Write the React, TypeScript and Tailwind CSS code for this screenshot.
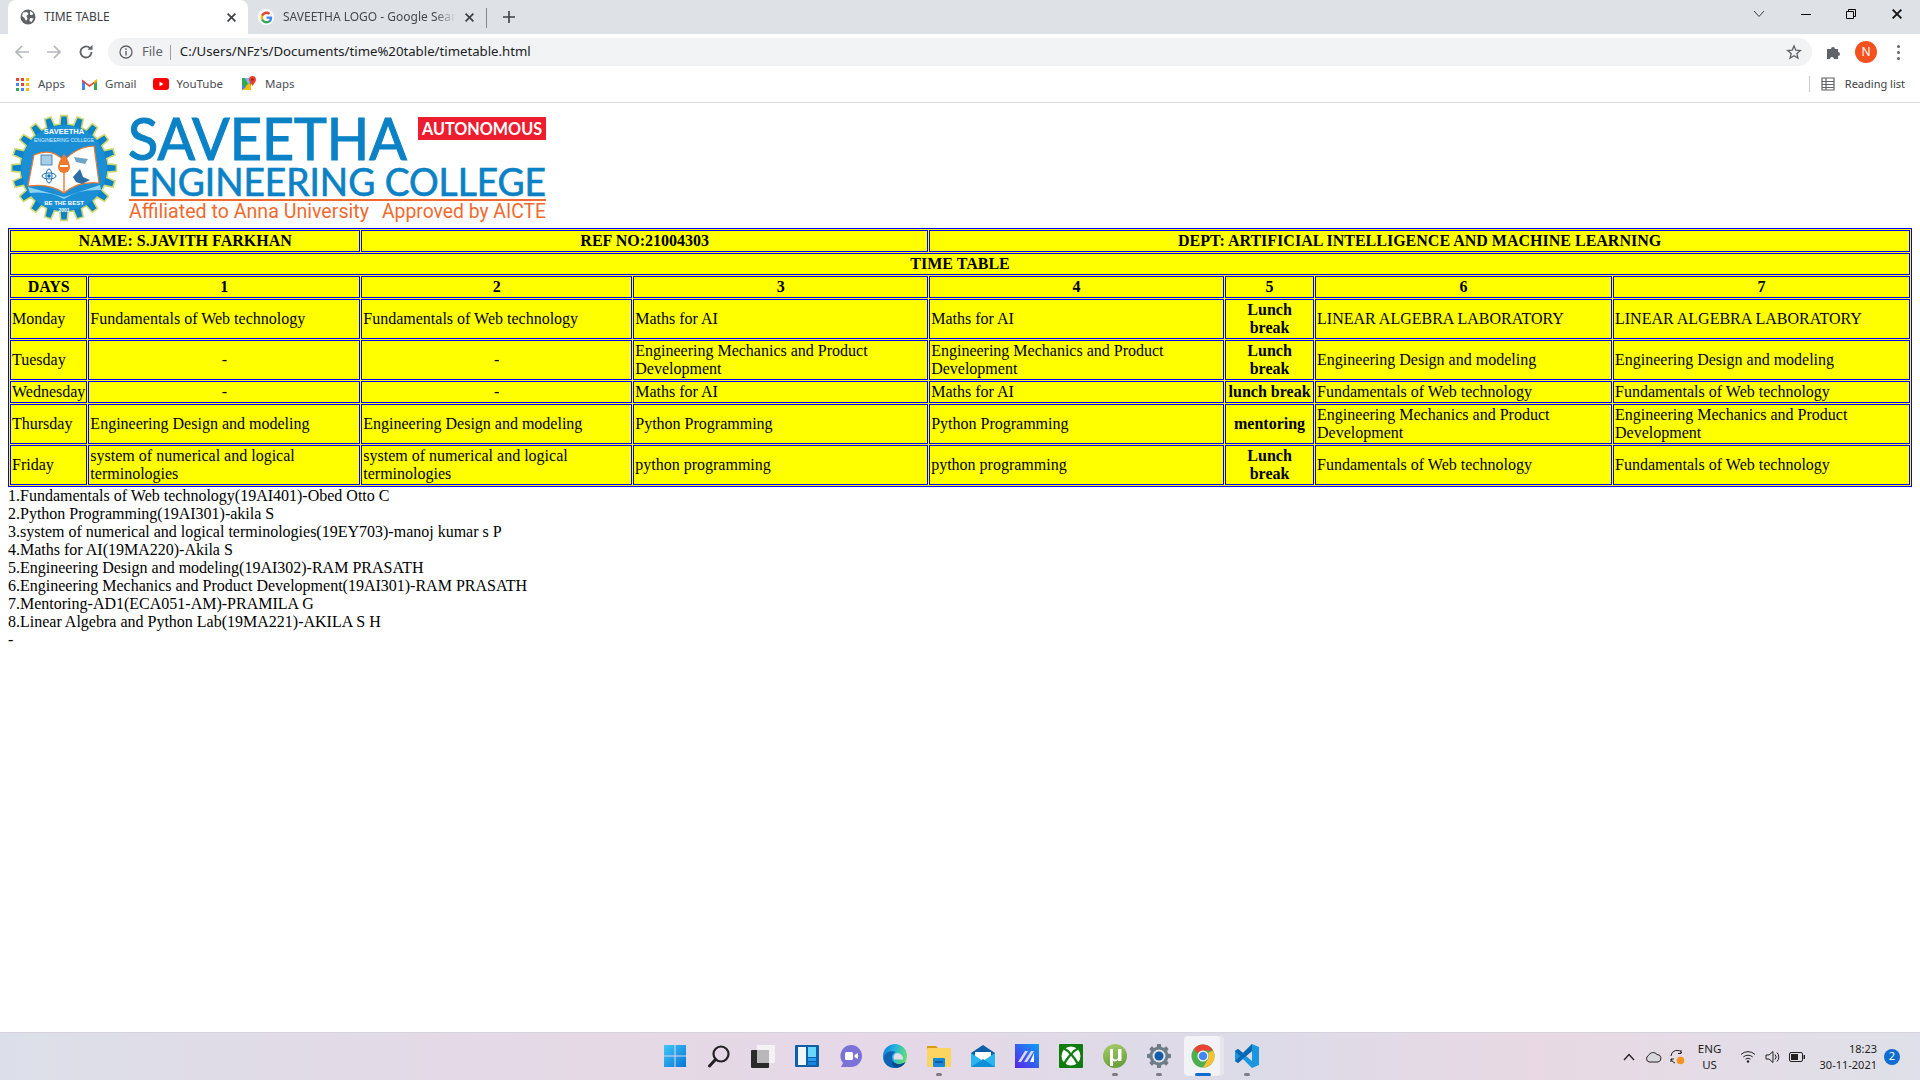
import type { ReactNode } from "react";

const ui = "font-['Noto_Sans',sans-serif]";

function gearPath(cx: number, cy: number, outer: number, inner: number, teeth: number) {
  const pts: string[] = [];
  const step = (Math.PI * 2) / teeth;
  for (let i = 0; i < teeth; i++) {
    const a = i * step - Math.PI / 2;
    const list: [number, number][] = [
      [inner, a - step * 0.3],
      [outer, a - step * 0.2],
      [outer, a + step * 0.2],
      [inner, a + step * 0.3],
    ];
    for (const [r, t] of list) {
      pts.push(`${(cx + r * Math.cos(t)).toFixed(1)} ${(cy + r * Math.sin(t)).toFixed(1)}`);
    }
  }
  return "M" + pts.join("L") + "Z";
}

function Logo() {
  return (
    <svg width="560" height="117" viewBox="0 0 560 117" className="block">
      {/* emblem */}
      <g transform="translate(0 -2)">
        <path d={gearPath(56, 59, 52.5, 44, 20)} fill="#0c82c8" stroke="#cfd86a" strokeWidth="1.6" />
        <circle cx="56" cy="59" r="43" fill="#1b8fd6" />
        <text x="56" y="25" textAnchor="middle" fontSize="7.5" fontWeight="700" fill="#fff" className="font-['Liberation_Sans',sans-serif]">SAVEETHA</text>
        <text x="56" y="33" textAnchor="middle" fontSize="5" fill="#d9f0ff" className="font-['Liberation_Sans',sans-serif]">ENGINEERING COLLEGE</text>
        <path d="M20 78 L56 88 L92 76 L93 81 Q70 80 56 90 Q42 82 22 84Z" fill="#8fd3f2" />
        <path d="M26 46 Q44 38 56 52 Q68 38 86 37 L91 74 Q70 72 56 84 Q42 74 20 77Z" fill="#fff" stroke="#f0792f" strokeWidth="1.2" />
        <rect x="33" y="46" width="11" height="10" fill="#a8cde6" stroke="#2c73a8" strokeWidth="0.8" />
        <path d="M66 48 L80 50 L77 55 L68 53Z" fill="#6fa5c9" />
        <circle cx="41" cy="67" r="1.800" fill="#1a6fb0" />
        <ellipse cx="41" cy="67" rx="7" ry="3" fill="none" stroke="#1a6fb0" strokeWidth="1" />
        <ellipse cx="41" cy="67" rx="3" ry="7" fill="none" stroke="#1a6fb0" strokeWidth="1" />
        <path d="M72 60 L75 68 L82 71 L74 75 L68 73 L65 68Z" fill="#2b6fa6" />
        <path d="M56 45 Q62 53 62 58 A6 6 0 0 1 50 58 Q50 53 56 45Z" fill="#f0792f" />
        <rect x="52" y="56" width="8" height="2" fill="#fff" />
        <rect x="55.300" y="63" width="1.400" height="20" fill="#f0792f" />
        <text x="56" y="96" textAnchor="middle" fontSize="6" fontWeight="700" fill="#fff" className="font-['Liberation_Sans',sans-serif]">BE THE BEST</text>
        <text x="56" y="103" textAnchor="middle" fontSize="5" fontWeight="700" fill="#fff" className="font-['Liberation_Sans',sans-serif]">2001</text>
      </g>
      {/* wordmark */}
      <text x="120" y="49" fontSize="59" fill="#0b82c6" stroke="#0b82c6" strokeWidth="1.200" textLength="279" lengthAdjust="spacingAndGlyphs" className="font-['Lato',sans-serif]">SAVEETHA</text>
      <rect x="410" y="6" width="128" height="23" fill="#ed1c2e" />
      <text x="414" y="24" fontSize="16.5" fontWeight="700" fill="#fff" textLength="120" lengthAdjust="spacingAndGlyphs" className="font-['Lato',sans-serif]">AUTONOMOUS</text>
      <text x="120" y="85" fontSize="38" fill="#0b82c6" stroke="#0b82c6" strokeWidth="0.700" textLength="418" lengthAdjust="spacingAndGlyphs" className="font-['Lato',sans-serif]">ENGINEERING COLLEGE</text>
      <rect x="121" y="88" width="417" height="2" fill="#f26a2e" />
      <text x="121" y="107" fontSize="20" fill="#f26a2e" textLength="240" lengthAdjust="spacingAndGlyphs" className="font-['Roboto',sans-serif]">Affiliated to Anna University</text>
      <text x="374" y="107" fontSize="20" fill="#f26a2e" textLength="164" lengthAdjust="spacingAndGlyphs" className="font-['Roboto',sans-serif]">Approved by AICTE</text>
    </svg>
  );
}

function Globe() {
  return (
    <svg width="16" height="16" viewBox="0 0 16 16">
      <circle cx="8" cy="8" r="7.5" fill="#5f6368" />
      <path d="M3 3.5 L7 3 L8.5 5 L6.5 7 L7.5 9.5 L6 12 L4.5 9 L2 7Z M10 2 L13 4 L12.5 6 L10 6Z M10 9 L13.5 9.5 L11.5 13 L9.5 12Z" fill="#fff" />
    </svg>
  );
}

function GoogleG({ size = 16 }: { size?: number }) {
  return (
    <svg width={size} height={size} viewBox="0 0 48 48">
      <path fill="#4285f4" d="M45 24.5c0-1.600-.1-3.100-.4-4.500H24v8.500h11.800c-.5 2.700-2 5-4.300 6.600v5.500h7C42.600 36.800 45 31.200 45 24.500z" />
      <path fill="#34a853" d="M24 46c5.900 0 10.900-2 14.500-5.300l-7-5.500c-2 1.300-4.500 2.100-7.500 2.100-5.700 0-10.600-3.900-12.300-9H4.500v5.600C8.100 41 15.500 46 24 46z" />
      <path fill="#fbbc05" d="M11.700 28.300c-.9-2.700-.9-5.700 0-8.500v-5.600H4.500c-3 6-3 13.700 0 19.700z" />
      <path fill="#ea4335" d="M24 10.700c3.200 0 6.100 1.100 8.400 3.300l6.200-6.200C34.900 4.300 29.900 2 24 2 15.500 2 8.100 7 4.500 14.200l7.200 5.600c1.700-5.200 6.600-9.100 12.300-9.100z" />
    </svg>
  );
}

function AppsGrid() {
  const colors = ["#ea4335", "#ea4335", "#fbbc05", "#4285f4", "#ea4335", "#fbbc05", "#34a853", "#4285f4", "#fbbc05"];
  return (
    <div className="grid grid-cols-3 gap-[2px] w-[13px] h-[13px]">
      {colors.map((c, i) => (
        <span key={i} className="w-[3px] h-[3px]" style={{ backgroundColor: c }} />
      ))}
    </div>
  );
}

function Gmail() {
  return (
    <svg width="15" height="12" viewBox="0 0 15 12">
      <path d="M0 2 L0 12 L3 12 L3 4Z" fill="#4285f4" />
      <path d="M15 2 L15 12 L12 12 L12 4Z" fill="#34a853" />
      <path d="M0 1.500 L7.500 7 L15 1.500 L15 3.500 L7.500 9 L0 3.500Z" fill="#ea4335" />
      <path d="M12 3 L15 1 L15 3.500 L12 5.500Z" fill="#fbbc05" />
    </svg>
  );
}

function YouTube() {
  return (
    <svg width="16" height="12" viewBox="0 0 16 12">
      <rect width="16" height="12" rx="3" fill="#f00" />
      <path d="M6.500 3.500 L10.500 6 L6.500 8.500Z" fill="#fff" />
    </svg>
  );
}

function Maps() {
  return (
    <svg width="14" height="16" viewBox="0 0 14 16">
      <path d="M0 2 L9 2 L9 14 L0 14Z" fill="#34a853" />
      <path d="M0 14 L7 7 L9 9 L9 14Z" fill="#fbbc05" />
      <path d="M0 14 L0 9 L4 11Z" fill="#4285f4" />
      <path d="M3 2 L9 2 L9 6 L6 8Z" fill="#8ab4f8" />
      <path d="M10.500 0 A3.500 3.500 0 0 1 14 3.500 C14 6 11.500 8 10.500 10 C9.500 8 7 6 7 3.500 A3.500 3.500 0 0 1 10.500 0Z" fill="#ea4335" />
      <circle cx="10.500" cy="3.500" r="1.200" fill="#a61c12" />
    </svg>
  );
}

function X({ size = 8, color = "#3c4043" }: { size?: number; color?: string }) {
  return (
    <svg width={size} height={size} viewBox="0 0 8 8" className="block">
      <path d="M0.500 0.500 L7.500 7.500 M7.500 0.500 L0.500 7.500" stroke={color} strokeWidth="1.500" />
    </svg>
  );
}

function TabBar() {
  return (
    <div className="h-[34px] bg-[#dee1e6] flex items-end shrink-0">
      <div className="ml-2 w-[240px] h-[34px] bg-white rounded-t-lg flex items-center pl-3 pr-3 text-[12px] text-[#3c4043]">
        <Globe />
        <span className="ml-2 flex-1">TIME TABLE</span>
        <X size={9} />
      </div>
      <div className="w-[238px] h-[34px] flex items-center pl-[10px] pr-3 text-[12px] text-[#45484d]">
        <span className="w-4 h-4 rounded-full bg-white flex items-center justify-center shrink-0">
          <GoogleG size={13} />
        </span>
        <span className="ml-[9px] w-[174px] overflow-hidden whitespace-nowrap [mask-image:linear-gradient(90deg,#000_88%,transparent_100%)]">SAVEETHA LOGO - Google Search</span>
        <span className="ml-[9px]"><X size={9} /></span>
      </div>
      <div className="w-px h-5 bg-[#80868b] mb-[6px]" />
      <div className="ml-[15px] h-[34px] flex items-center">
        <svg width="14" height="14" viewBox="0 0 14 14">
          <path d="M7 1 V13 M1 7 H13" stroke="#3c4043" strokeWidth="1.600" />
        </svg>
      </div>
      <div className="flex-1" />
      <div className="h-[28px] self-start flex items-center">
        <svg width="12" height="8" viewBox="0 0 12 8" className="mr-[36px]">
          <path d="M1 1 L6 6.500 L11 1" fill="none" stroke="#3c4043" strokeWidth="1" />
        </svg>
        <div className="w-[10px] h-px bg-black mr-[35px]" />
        <svg width="10" height="10" viewBox="0 0 10 10" className="mr-[36px]">
          <path d="M0.500 2.500 H7.500 V9.500 H0.500Z M2.500 2.500 V0.500 H9.500 V7.500 H7.500" fill="none" stroke="#000" strokeWidth="1" />
        </svg>
        <span className="mr-[18px]"><X size={10} color="#111" /></span>
      </div>
    </div>
  );
}

function Toolbar() {
  return (
    <div className="h-[34px] pt-[2px] bg-white flex items-center shrink-0">
      <svg width="16" height="16" viewBox="0 0 16 16" className="ml-[14px]">
        <path d="M15 8 H2 M8 2 L2 8 L8 14" fill="none" stroke="#b5b7ba" strokeWidth="1.700" />
      </svg>
      <svg width="16" height="16" viewBox="0 0 16 16" className="ml-4">
        <path d="M1 8 H14 M8 2 L14 8 L8 14" fill="none" stroke="#b5b7ba" strokeWidth="1.700" />
      </svg>
      <svg width="16" height="16" viewBox="0 0 16 16" className="ml-4">
        <path d="M13.500 8 A5.500 5.500 0 1 1 11.800 4" fill="none" stroke="#5f6368" strokeWidth="1.800" />
        <path d="M9.500 5.700 H14.500 V0.700Z" fill="#5f6368" />
      </svg>
      <div className="ml-[14px] w-[1704px] h-7 rounded-full bg-[#f1f3f4] flex items-center">
        <svg width="14" height="14" viewBox="0 0 14 14" className="ml-[11px]">
          <circle cx="7" cy="7" r="6" fill="none" stroke="#5f6368" strokeWidth="1.300" />
          <path d="M7 6 V10.500 M7 3.300 V5" stroke="#5f6368" strokeWidth="1.400" />
        </svg>
        <span className="ml-[9px] text-[13px] text-[#5f6368]">File</span>
        <span className="ml-[7px] w-px h-[15px] bg-[#9aa0a6]" />
        <span className="ml-[9px] text-[13.2px] text-[#202124] flex-1 whitespace-nowrap">C:/Users/NFz's/Documents/time%20table/timetable.html</span>
        <svg width="16" height="16" viewBox="0 0 24 24" className="mr-[10px]">
          <path d="M12 3 L14.700 9.300 L21.500 9.900 L16.300 14.400 L17.900 21 L12 17.500 L6.100 21 L7.700 14.400 L2.500 9.900 L9.300 9.300Z" fill="none" stroke="#5f6368" strokeWidth="2" />
        </svg>
      </div>
      <svg width="16" height="16" viewBox="0 0 16 16" className="ml-[14px]">
        <path d="M1 5 H5 A2 2 0 1 1 9 5 H12 V8 A2 2 0 1 1 12 12 V15 H8 A2 2 0 1 0 4 15 H1Z" fill="#5f6368" />
      </svg>
      <div className="ml-[13px] w-[22px] h-[22px] rounded-full bg-[#f4511e] text-white text-[12px] flex items-center justify-center">N</div>
      <div className="ml-[20px] flex flex-col gap-[3px]">
        <span className="w-[3px] h-[3px] rounded-full bg-[#5f6368]" />
        <span className="w-[3px] h-[3px] rounded-full bg-[#5f6368]" />
        <span className="w-[3px] h-[3px] rounded-full bg-[#5f6368]" />
      </div>
    </div>
  );
}

function Bookmark({ icon, label, className }: { icon: ReactNode; label: string; className: string }) {
  return (
    <div className={`flex items-center ${className}`}>
      <span className="w-4 flex justify-center">{icon}</span>
      <span className="ml-2 text-[11.5px] text-[#4a4d51]">{label}</span>
    </div>
  );
}

function Bookmarks() {
  return (
    <div className="h-[35px] pb-[2px] bg-white border-b border-[#d9dadc] flex items-center shrink-0">
      <Bookmark icon={<AppsGrid />} label="Apps" className="ml-[14px]" />
      <Bookmark icon={<Gmail />} label="Gmail" className="ml-[16px]" />
      <Bookmark icon={<YouTube />} label="YouTube" className="ml-[16px]" />
      <Bookmark icon={<Maps />} label="Maps" className="ml-[18px]" />
      <div className="flex-1" />
      <div className="w-px h-[16px] bg-[#c9cbce]" />
      <svg width="14" height="14" viewBox="0 0 14 14" className="ml-[11px]">
        <path d="M1 1 H13 V13 H1Z M5 1 V13 M1 4.500 H13 M1 7.500 H13 M1 10.500 H13" fill="none" stroke="#5f6368" strokeWidth="1.200" />
      </svg>
      <span className="ml-[10px] mr-[15px] text-[11px] text-[#3c4043]">Reading list</span>
    </div>
  );
}

const td = "border border-[#0000ff] px-px py-0 align-middle";
const th = "border border-[#0000ff] px-px py-0 align-middle font-bold text-center";

type Cell = { text: string; center?: boolean; bold?: boolean };

const rows: { h: string; cells: Cell[] }[] = [
  {
    h: "h-[40px]",
    cells: [
      { text: "Monday" },
      { text: "Fundamentals of Web technology" },
      { text: "Fundamentals of Web technology" },
      { text: "Maths for AI" },
      { text: "Maths for AI" },
      { text: "Lunch break", center: true, bold: true },
      { text: "LINEAR ALGEBRA LABORATORY" },
      { text: "LINEAR ALGEBRA LABORATORY" },
    ],
  },
  {
    h: "h-[40px]",
    cells: [
      { text: "Tuesday" },
      { text: "-", center: true },
      { text: "-", center: true },
      { text: "Engineering Mechanics and Product Development" },
      { text: "Engineering Mechanics and Product Development" },
      { text: "Lunch break", center: true, bold: true },
      { text: "Engineering Design and modeling" },
      { text: "Engineering Design and modeling" },
    ],
  },
  {
    h: "h-[22px]",
    cells: [
      { text: "Wednesday" },
      { text: "-", center: true },
      { text: "-", center: true },
      { text: "Maths for AI" },
      { text: "Maths for AI" },
      { text: "lunch break", center: true, bold: true },
      { text: "Fundamentals of Web technology" },
      { text: "Fundamentals of Web technology" },
    ],
  },
  {
    h: "h-[40px]",
    cells: [
      { text: "Thursday" },
      { text: "Engineering Design and modeling" },
      { text: "Engineering Design and modeling" },
      { text: "Python Programming" },
      { text: "Python Programming" },
      { text: "mentoring", center: true, bold: true },
      { text: "Engineering Mechanics and Product Development" },
      { text: "Engineering Mechanics and Product Development" },
    ],
  },
  {
    h: "h-[40px]",
    cells: [
      { text: "Friday" },
      { text: "system of numerical and logical terminologies" },
      { text: "system of numerical and logical terminologies" },
      { text: "python programming" },
      { text: "python programming" },
      { text: "Lunch break", center: true, bold: true },
      { text: "Fundamentals of Web technology" },
      { text: "Fundamentals of Web technology" },
    ],
  },
];

const notes = [
  "1.Fundamentals of Web technology(19AI401)-Obed Otto C",
  "2.Python Programming(19AI301)-akila S",
  "3.system of numerical and logical terminologies(19EY703)-manoj kumar s P",
  "4.Maths for AI(19MA220)-Akila S",
  "5.Engineering Design and modeling(19AI302)-RAM PRASATH",
  "6.Engineering Mechanics and Product Development(19AI301)-RAM PRASATH",
  "7.Mentoring-AD1(ECA051-AM)-PRAMILA G",
  "8.Linear Algebra and Python Lab(19MA221)-AKILA S H",
  "-",
];

function TimeTable() {
  return (
    <table className="w-full border-separate [border-spacing:1px] border border-[#0000ff] bg-[#ffff00] text-black text-[16px] leading-[18px]">
      <colgroup>
        <col className="w-[77px]" />
        <col className="w-[272px]" />
        <col className="w-[271px]" />
        <col className="w-[295px]" />
        <col className="w-[295px]" />
        <col className="w-[89px]" />
        <col className="w-[297px]" />
        <col className="w-[297px]" />
      </colgroup>
      <tbody>
        <tr>
          <th colSpan={2} className={`${th} h-[22px]`}>NAME: S.JAVITH FARKHAN</th>
          <th colSpan={2} className={th}>REF NO:21004303</th>
          <th colSpan={4} className={th}>DEPT: ARTIFICIAL INTELLIGENCE AND MACHINE LEARNING</th>
        </tr>
        <tr>
          <th colSpan={8} className={`${th} h-[22px]`}>TIME TABLE</th>
        </tr>
        <tr>
          <th className={`${th} h-[22px]`}>DAYS</th>
          {[1, 2, 3, 4, 5, 6, 7].map((n) => (
            <th key={n} className={th}>{n}</th>
          ))}
        </tr>
        {rows.map((row) => (
          <tr key={row.cells[0].text}>
            {row.cells.map((c, i) => (
              <td
                key={i}
                className={`${td} ${row.h} ${c.center ? "text-center" : "text-left"} ${c.bold ? "font-bold" : "font-normal"}`}
              >
                {c.text}
              </td>
            ))}
          </tr>
        ))}
      </tbody>
    </table>
  );
}

function WinStart() {
  return (
    <svg width="24" height="24" viewBox="0 0 24 24">
      <defs>
        <linearGradient id="win" x1="0" y1="0" x2="1" y2="1">
          <stop offset="0" stopColor="#3fc8f8" />
          <stop offset="1" stopColor="#0674d6" />
        </linearGradient>
      </defs>
      <path d="M1 1 H11.500 V11.500 H1Z M12.500 1 H23 V11.500 H12.500Z M1 12.500 H11.500 V23 H1Z M12.500 12.500 H23 V23 H12.500Z" fill="url(#win)" />
    </svg>
  );
}

function SearchIcon() {
  return (
    <svg width="24" height="24" viewBox="0 0 24 24">
      <circle cx="14" cy="10" r="7.500" fill="none" stroke="#222" strokeWidth="2.200" />
      <path d="M8.500 15.500 L2.500 22" stroke="#222" strokeWidth="3" strokeLinecap="round" />
    </svg>
  );
}

function TaskView() {
  return (
    <svg width="24" height="24" viewBox="0 0 24 24">
      <rect x="6" y="1" width="18" height="18" rx="1" fill="#f4f2f4" />
      <rect x="0" y="6" width="18" height="18" rx="1" fill="#2a2a2a" />
      <rect x="6" y="6" width="12" height="13" fill="#b9b7b9" />
    </svg>
  );
}

function Widgets() {
  return (
    <svg width="24" height="24" viewBox="0 0 24 24">
      <rect width="24" height="22" y="1" rx="1" fill="#0f5fa8" />
      <rect x="3" y="3" width="8" height="18" fill="#f2f5f8" />
      <rect x="13" y="3" width="8" height="10" fill="#69d6fb" />
      <rect x="13" y="14" width="8" height="3" fill="#2a9cf0" />
      <rect x="13" y="18" width="8" height="3" fill="#1683e0" />
    </svg>
  );
}

function Chat() {
  return (
    <svg width="24" height="24" viewBox="0 0 24 24">
      <path d="M12 1 A11 11 0 0 1 12 23 H2 L4 19 A11 11 0 0 1 12 1Z" fill="#7b72d8" />
      <rect x="6" y="8" width="8" height="8" rx="1.500" fill="#fff" />
      <path d="M15.500 11 L19 9 V15 L15.500 13Z" fill="#fff" />
    </svg>
  );
}

function Edge() {
  return (
    <svg width="24" height="24" viewBox="0 0 24 24">
      <defs>
        <linearGradient id="edge" x1="0" y1="0" x2="1" y2="0.300">
          <stop offset="0" stopColor="#0c78d1" />
          <stop offset="0.500" stopColor="#25b3e0" />
          <stop offset="1" stopColor="#5fdc7a" />
        </linearGradient>
      </defs>
      <circle cx="12" cy="12" r="12" fill="url(#edge)" />
      <path d="M0.500 15 C1 8 8 6 13 8 C9 9 8 13 10 17 C12 21 18 21 22.500 18 A12 12 0 0 1 12 24 C6 24 1 20 0.500 15Z" fill="#0d63b4" />
      <path d="M10 17 C12 21 18 21 22.500 18 A12 12 0 0 1 14 23.800 C10 23 8 20 10 17Z" fill="#0b4a8e" />
      <path d="M12.500 9.500 C17 8.500 20.500 11.500 20 15.500 H11 C10 13 10.500 11 12.500 9.500Z" fill="#e6ddea" />
    </svg>
  );
}

function Folder() {
  return (
    <svg width="24" height="24" viewBox="0 0 24 24">
      <path d="M0 2 H9 L11 4 H5 V6 H0Z" fill="#d69a14" />
      <rect x="0" y="4" width="24" height="19" rx="1" fill="#fcd462" />
      <rect x="6" y="14" width="12" height="9" rx="1" fill="#1487d8" />
      <rect x="8" y="17" width="8" height="2" fill="#0d5da6" />
    </svg>
  );
}

function Mail() {
  return (
    <svg width="24" height="24" viewBox="0 0 24 24">
      <path d="M0 9 L12 1 L24 9 V12 H0Z" fill="#0a5fa8" />
      <path d="M4 8 H20 V13 L12 18 L4 13Z" fill="#fff" />
      <path d="M0 9 L12 17 L24 9 V23 H0Z" fill="#29b6f0" />
      <path d="M0 23 L12 15 L24 23Z" fill="#0f8ed8" />
    </svg>
  );
}

function MaText() {
  return (
    <svg width="24" height="24" viewBox="0 0 24 24">
      <defs>
        <linearGradient id="ma" x1="0" y1="1" x2="1" y2="0">
          <stop offset="0" stopColor="#5b22e8" />
          <stop offset="1" stopColor="#0aa0f5" />
        </linearGradient>
      </defs>
      <rect width="24" height="24" fill="url(#ma)" />
      <path d="M3 18 L10 7 H13 L6 18Z M9 18 L16 7 H19 L12 18Z" fill="#dcd6f5" />
      <path d="M15 18 L19 9 V18Z" fill="#fff" />
    </svg>
  );
}

function Xbox() {
  return (
    <svg width="24" height="24" viewBox="0 0 24 24">
      <rect width="24" height="24" rx="1" fill="#107c10" />
      <circle cx="12" cy="12" r="9.500" fill="#fff" />
      <path d="M5 4.500 C9 6.500 15 13 19 20 M19 4.500 C15 6.500 9 13 5 20" fill="none" stroke="#107c10" strokeWidth="2.400" />
      <path d="M8.500 4 Q12 6 15.500 4 L12 9Z" fill="#fff" />
    </svg>
  );
}

function UTorrent() {
  return (
    <svg width="24" height="24" viewBox="0 0 24 24">
      <defs>
        <linearGradient id="ut" x1="0" y1="0" x2="0.300" y2="1">
          <stop offset="0" stopColor="#a9cf6b" />
          <stop offset="1" stopColor="#6ba13b" />
        </linearGradient>
      </defs>
      <circle cx="12" cy="12" r="12" fill="url(#ut)" />
      <path d="M7 5 H10 V13 A2.500 2.500 0 0 0 15 13 V5 H18.500 V17 H15 V16 C12 18 10.500 17.500 10 17 V22 H7Z" fill="#fff" />
    </svg>
  );
}

function Settings() {
  return (
    <svg width="24" height="24" viewBox="0 0 24 24">
      <path d={gearPath(12, 12, 12, 9.500, 8)} fill="#6f7b86" />
      <circle cx="12" cy="12" r="6.500" fill="#dfe4ea" />
      <circle cx="12" cy="12" r="4.500" fill="#0f5ca8" />
    </svg>
  );
}

function Chrome() {
  return (
    <svg width="24" height="24" viewBox="0 0 48 48">
      <circle cx="24" cy="24" r="23" fill="#4caf50" />
      <path d="M24 1 A23 23 0 0 1 44 13 H24 A11 11 0 0 0 14 19 L6 10 A23 23 0 0 1 24 1Z" fill="#ea4335" />
      <path d="M44 13 A23 23 0 0 1 24 47 L34 30 A11 11 0 0 0 34 18Z" fill="#fbc02d" />
      <circle cx="24" cy="24" r="11" fill="#fff" />
      <circle cx="24" cy="24" r="8.500" fill="#4285f4" />
    </svg>
  );
}

function VSCode() {
  return (
    <svg width="24" height="24" viewBox="0 0 24 24">
      <path d="M17 0 L24 3 V21 L17 24 L8 15 L3 19 L0 17 V7 L3 5 L8 9Z M17 7 L11 12 L17 17Z" fill="#1a97e0" fillRule="evenodd" />
      <path d="M17 0 L8 9 L3 5 L0 7 L5 12 L0 17 L3 19 L17 7Z" fill="#0868b0" />
    </svg>
  );
}

const dock: { icon: ReactNode; dot?: boolean; active?: boolean }[] = [
  { icon: <WinStart /> },
  { icon: <SearchIcon /> },
  { icon: <TaskView /> },
  { icon: <Widgets /> },
  { icon: <Chat /> },
  { icon: <Edge /> },
  { icon: <Folder />, dot: true },
  { icon: <Mail /> },
  { icon: <MaText /> },
  { icon: <Xbox /> },
  { icon: <UTorrent />, dot: true },
  { icon: <Settings />, dot: true },
  { icon: <Chrome />, active: true },
  { icon: <VSCode />, dot: true },
];

function Taskbar() {
  return (
    <div className={`relative h-12 shrink-0 border-t border-[#d6d3dc] bg-[linear-gradient(90deg,#dcdfe9_0%,#e4d9e6_25%,#e6d8e6_45%,#dcdbe8_65%,#e8d9e4_80%,#dfe0e9_100%)] flex items-center justify-center ${ui}`}>
      <div className="flex items-center pl-px mb-px">
        {dock.map((d, i) => (
          <div key={i} className="relative w-11 h-10 flex items-center justify-center">
            {d.active && <span className="absolute top-0 bottom-0 left-[5px] w-[38px] rounded bg-[#e7e5ed]" />}
            {d.active && <span className="absolute top-0 bottom-0 left-[3px] w-[36px] rounded bg-[#f3f2f6]" />}
            <span className="relative">{d.icon}</span>
            {d.dot && <span className="absolute bottom-0 left-1/2 -translate-x-1/2 w-[6px] h-[3px] rounded-full bg-[#7d7d84]" />}
            {d.active && <span className="absolute bottom-0 left-1/2 -translate-x-1/2 w-4 h-[3px] rounded-full bg-[#0f6cd0]" />}
          </div>
        ))}
      </div>
      <div className="absolute right-0 top-0 h-full flex items-center text-[#1f1f22]">
        <svg width="12" height="8" viewBox="0 0 12 8">
          <path d="M1 7 L6 1.500 L11 7" fill="none" stroke="#222" strokeWidth="1.300" />
        </svg>
        <svg width="17" height="12" viewBox="0 0 17 12" className="ml-[10px]">
          <path d="M4 11 A3.500 3.500 0 0 1 3.500 4.500 A5 5 0 0 1 12 3.500 A3.800 3.800 0 0 1 13 11Z" fill="#d8d8dc" stroke="#222" strokeWidth="1" />
        </svg>
        <svg width="16" height="16" viewBox="0 0 16 16" className="ml-[7px]">
          <path d="M2 7 A6 6 0 0 1 13 4 M12 1 V4.500 H9 M2 13 V10 H5 M2 10 A6 6 0 0 0 6 14" fill="none" stroke="#222" strokeWidth="1" />
          <circle cx="11.500" cy="11.500" r="3.800" fill="#f7931e" />
        </svg>
        <div className="ml-[10px] w-[30px] text-center text-[11.5px] leading-[16px]">
          <div>ENG</div>
          <div>US</div>
        </div>
        <svg width="16" height="13" viewBox="0 0 16 13" className="ml-[15px]">
          <path d="M1 4.500 A10 10 0 0 1 15 4.500 M3.300 7 A7 7 0 0 1 12.700 7 M5.500 9.200 A4 4 0 0 1 10.500 9.200" fill="none" stroke="#222" strokeWidth="1" />
          <circle cx="8" cy="11.500" r="1.200" fill="#222" />
        </svg>
        <svg width="16" height="14" viewBox="0 0 16 14" className="ml-[9px]">
          <path d="M1 5 H4 L8 1.500 V12.500 L4 9 H1Z M10 4.500 A3.500 3.500 0 0 1 10 9.500 M12 2.500 A6.500 6.500 0 0 1 12 11.500" fill="none" stroke="#222" strokeWidth="1" />
        </svg>
        <svg width="16" height="10" viewBox="0 0 16 10" className="ml-[8px]">
          <rect x="0.500" y="0.500" width="13" height="9" rx="1.500" fill="none" stroke="#222" />
          <rect x="2" y="2" width="7" height="6" fill="#222" />
          <rect x="14.500" y="3" width="1.500" height="4" fill="#222" />
        </svg>
        <div className="ml-[15px] text-right text-[11px] leading-[16px] whitespace-nowrap">
          <div>18:23</div>
          <div>30-11-2021</div>
        </div>
        <span className="ml-[7px] mr-[20px] w-4 h-4 rounded-full bg-[#0f6cd0] text-white text-[11px] flex items-center justify-center">2</span>
      </div>
    </div>
  );
}

export default function App() {
  return (
    <div className="w-[1920px] h-[1080px] flex flex-col overflow-hidden bg-white">
      <div className={`flex flex-col shrink-0 ${ui}`}>
        <TabBar />
        <Toolbar />
        <Bookmarks />
      </div>
      <main className="flex-1 min-h-0 overflow-hidden bg-white p-2 font-['Liberation_Serif',serif]">
        <div className="h-[117px]">
          <Logo />
        </div>
        <TimeTable />
        <div className="text-[16px] leading-[18px] text-black">
          {notes.map((n, i) => (
            <div key={i}>{n}</div>
          ))}
        </div>
      </main>
      <Taskbar />
    </div>
  );
}
